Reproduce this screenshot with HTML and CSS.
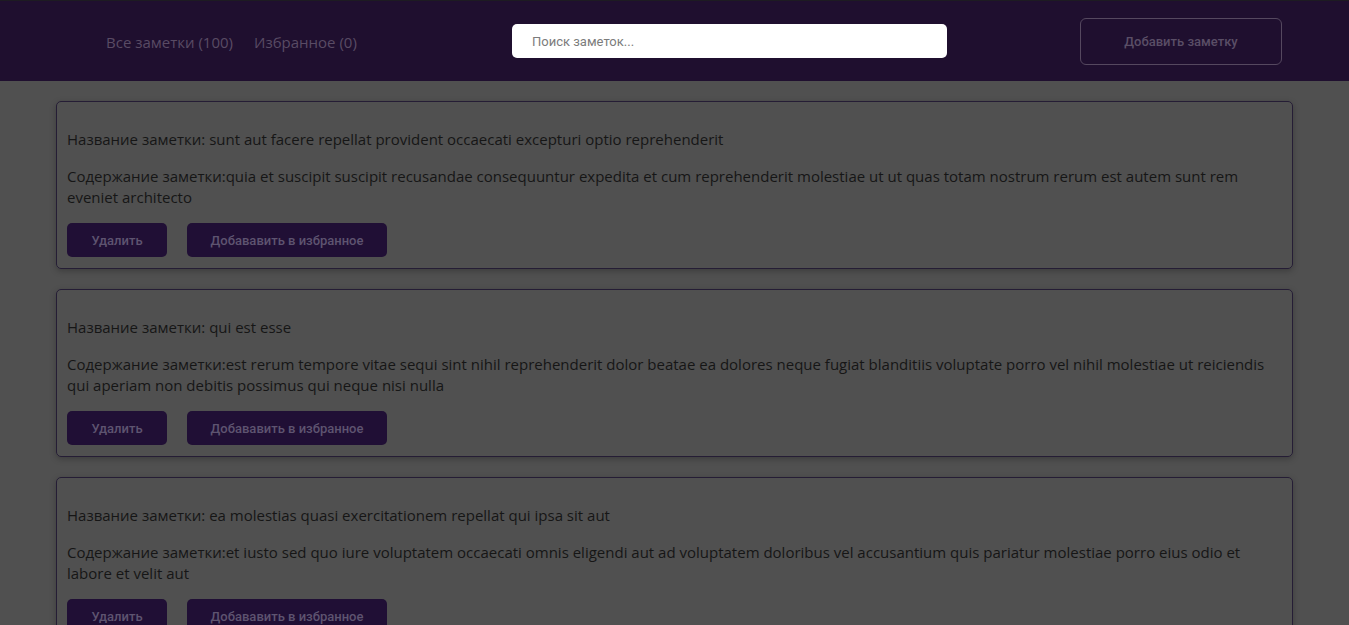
FILE: index.html
```html
<!DOCTYPE html>
<html lang="ru">
<head>
<meta charset="utf-8">
<title>Заметки</title>
<link rel="stylesheet" href="styles.css">
</head>
<body>
<header class="header">
  <nav class="nav">
    <a class="nav-link" href="#">Все заметки (100)</a>
    <a class="nav-link" href="#">Избранное (0)</a>
  </nav>
  <input class="search" type="text" placeholder="Поиск заметок...">
  <button class="add-btn">Добавить заметку</button>
</header>
<main class="list">
  <article class="card">
    <p class="card-text">Название заметки: sunt aut facere repellat provident occaecati excepturi optio reprehenderit</p>
    <p class="card-text">Содержание заметки:quia et suscipit suscipit recusandae consequuntur expedita et cum reprehenderit molestiae ut ut quas totam nostrum rerum est autem sunt rem eveniet architecto</p>
    <div class="actions">
      <button class="btn btn-del">Удалить</button>
      <button class="btn btn-fav">Добававить в избранное</button>
    </div>
  </article>
  <article class="card">
    <p class="card-text">Название заметки: qui est esse</p>
    <p class="card-text">Содержание заметки:est rerum tempore vitae sequi sint nihil reprehenderit dolor beatae ea dolores neque fugiat blanditiis voluptate porro vel nihil molestiae ut reiciendis qui aperiam non debitis possimus qui neque nisi nulla</p>
    <div class="actions">
      <button class="btn btn-del">Удалить</button>
      <button class="btn btn-fav">Добававить в избранное</button>
    </div>
  </article>
  <article class="card">
    <p class="card-text">Название заметки: ea molestias quasi exercitationem repellat qui ipsa sit aut</p>
    <p class="card-text">Содержание заметки:et iusto sed quo iure voluptatem occaecati omnis eligendi aut ad voluptatem doloribus vel accusantium quis pariatur molestiae porro eius odio et labore et velit aut</p>
    <div class="actions">
      <button class="btn btn-del">Удалить</button>
      <button class="btn btn-fav">Добававить в избранное</button>
    </div>
  </article>
</main>
</body>
</html>
```
FILE: styles.css
```css
* { box-sizing: border-box; }
html, body { margin: 0; padding: 0; }
body {
  background: #505050;
  font-family: "Open Sans", "Noto Sans", sans-serif;
  color: #161616;
  overflow: hidden;
}
.header {
  height: 81px;
  background: #1f0f2f;
  border-top: 1px solid #1d1b22;
  display: flex;
  align-items: center;
  padding: 2px 67px 0 106px;
}
.nav {
  display: flex;
  gap: 21px;
  width: 406px;
}
.nav-link {
  color: #594b64;
  text-decoration: none;
  font-size: 15px;
  font-family: "Open Sans", sans-serif;
}
.search {
  width: 435px;
  height: 34px;
  margin-top: -2px;
  border: none;
  border-radius: 5px;
  background: #fff;
  padding: 0 20px;
  font-family: Roboto, sans-serif;
  font-size: 13px;
  outline: none;
}
.search::placeholder { color: #7c7c7c; }
.add-btn {
  margin-left: auto;
  margin-top: -2px;
  width: 202px;
  height: 47px;
  background: transparent;
  border: 1px solid #55485f;
  border-radius: 6px;
  color: #5a4e66;
  font-family: Roboto, sans-serif;
  font-weight: 500;
  font-size: 13px;
}
.list {
  padding: 20px 56px;
  display: flex;
  flex-direction: column;
  gap: 20px;
}
.card {
  border: 1px solid #251d35;
  border-radius: 5px;
  padding: 11px 10px;
  box-shadow: 0 2px 6px rgba(0, 0, 0, 0.25);
}
.card-text {
  margin: 16px 0;
  font-size: 15px;
  line-height: 21px;
}
.card-text + .card-text { margin-bottom: 15px; }
.actions {
  display: flex;
  gap: 20px;
}
.btn {
  height: 34px;
  border: none;
  border-radius: 5px;
  background: #200f35;
  color: #5e5470;
  font-family: Roboto, sans-serif;
  font-weight: 500;
  font-size: 13px;
}
.btn-del { width: 100px; }
.btn-fav { width: 200px; }
```
